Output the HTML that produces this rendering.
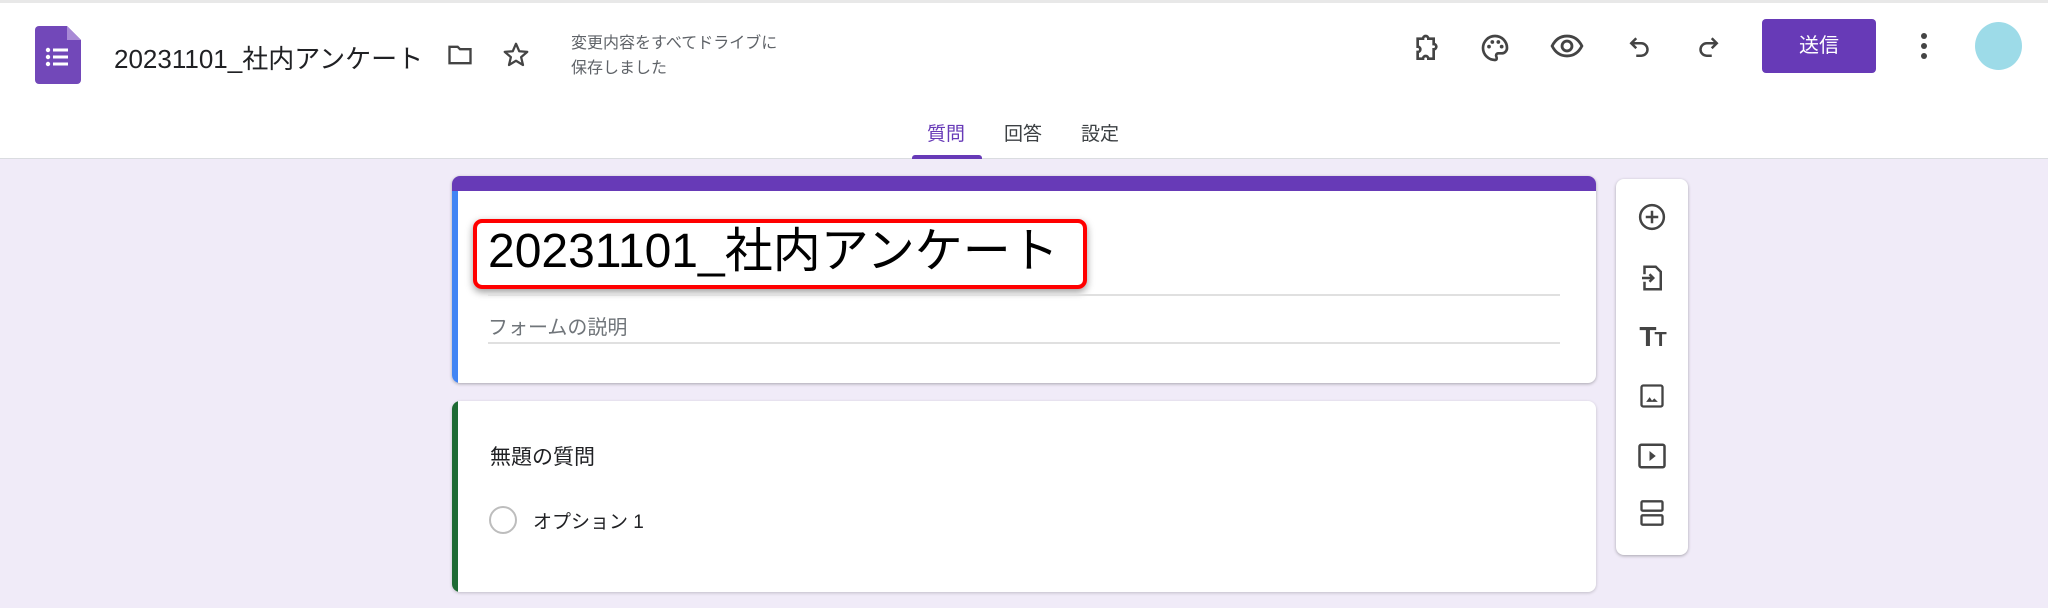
<!DOCTYPE html>
<html><head><meta charset="utf-8"><style>
*{margin:0;padding:0;box-sizing:border-box}
body{width:2048px;height:608px;background:#f0ebf8;font-family:"Liberation Sans","Noto Sans CJK JP",sans-serif;position:relative;overflow:hidden;color:#202124}
.abs{position:absolute}
header{position:absolute;left:0;top:0;width:2048px;height:159px;background:#fff;border-bottom:1px solid #dadce0;border-top:3px solid #e8e8e8}
.ic{position:absolute;transform:translate(-50%,-50%)}
</style></head><body>
<header></header>
<svg class="abs" style="left:35px;top:26px" width="46" height="58" viewBox="0 0 46 58"><path d="M4 0H32L46 14V54a4 4 0 0 1-4 4H4a4 4 0 0 1-4-4V4a4 4 0 0 1 4-4z" fill="#7248b9"/><path d="M32 0V14H46z" fill="#a98ad6"/><g fill="#fff"><circle cx="13" cy="24" r="2.2"/><circle cx="13" cy="31" r="2.2"/><circle cx="13" cy="38" r="2.2"/><rect x="18" y="22.5" width="15" height="3"/><rect x="18" y="29.5" width="15" height="3"/><rect x="18" y="36.5" width="15" height="3"/></g></svg>
<div class="abs" style="left:114px;top:39px;font-size:26px;color:#202124">20231101_社内アンケート</div>
<svg class="ic" style="left:460px;top:55px" width="28" height="28" viewBox="0 0 24 24"><path d="M3 5h7l2 2h9v12H3z" fill="none" stroke="#444" stroke-width="2"/></svg>
<svg class="ic" style="left:516px;top:55px" width="30" height="30" viewBox="0 0 24 24"><path d="M12 3l2.6 6 6.4.5-4.9 4.2 1.5 6.3L12 16.6 6.4 20l1.5-6.3L3 9.5 9.4 9z" fill="none" stroke="#444" stroke-width="1.8" stroke-linejoin="round"/></svg>
<div class="abs" style="left:571px;top:31px;font-size:16px;line-height:25px;color:#5f6368">変更内容をすべてドライブに<br>保存しました</div>
<svg class="ic" style="left:1427px;top:48px" width="32" height="32" viewBox="0 0 24 24"><path d="M5 5h4a2 2 0 0 1 4 0h4v4a2 2 0 0 1 0 4v7h-4a2 2 0 0 0-4 0H5v-5a2 2 0 0 0 0-4z" fill="none" stroke="#444" stroke-width="2"/></svg>
<svg class="ic" style="left:1495px;top:48px" width="32" height="32" viewBox="0 0 24 24"><path d="M12 3a9 9 0 0 0 0 18c1.5 0 1.5-1.5 1-2.5s0-2.5 1.5-2.5H17a4 4 0 0 0 4-4c0-5-4-9-9-9z" fill="none" stroke="#444" stroke-width="2"/><circle cx="7.5" cy="11" r="1.4" fill="#444"/><circle cx="10" cy="7.5" r="1.4" fill="#444"/><circle cx="14.5" cy="7.5" r="1.4" fill="#444"/><circle cx="17" cy="11" r="1.4" fill="#444"/></svg>
<svg class="ic" style="left:1567px;top:46px" width="34" height="34" viewBox="0 0 24 24"><path d="M1.5 12C4 7 8 5 12 5s8 2 10.5 7c-2.5 5-6.5 7-10.5 7S4 17 1.5 12z" fill="none" stroke="#444" stroke-width="2"/><circle cx="12" cy="12" r="3.5" fill="none" stroke="#444" stroke-width="2"/></svg>
<svg class="ic" style="left:1640px;top:47px" width="30" height="30" viewBox="0 0 24 24"><path d="M9 5L5 9l4 4M5 9h8a5 5 0 0 1 0 10H9" fill="none" stroke="#444" stroke-width="2"/></svg>
<svg class="ic" style="left:1708px;top:47px" width="30" height="30" viewBox="0 0 24 24"><path d="M15 5l4 4-4 4M19 9h-8a5 5 0 0 0 0 10h4" fill="none" stroke="#444" stroke-width="2"/></svg>
<div class="abs" style="left:1762px;top:19px;width:114px;height:54px;background:#673ab7;border-radius:4px;color:#fff;font-size:20px;line-height:54px;text-align:center">送信</div>
<svg class="ic" style="left:1924px;top:46px" width="8" height="30" viewBox="0 0 8 30"><circle cx="4" cy="5" r="3" fill="#444"/><circle cx="4" cy="15" r="3" fill="#444"/><circle cx="4" cy="25" r="3" fill="#444"/></svg>
<div class="abs" style="left:1975px;top:22px;width:47px;height:48px;border-radius:50%;background:#9ddbe8"></div>
<div class="abs" style="left:927px;top:119px;font-size:19px;color:#673ab7">質問</div>
<div class="abs" style="left:1004px;top:119px;font-size:19px;color:#3c4043">回答</div>
<div class="abs" style="left:1081px;top:119px;font-size:19px;color:#3c4043">設定</div>
<div class="abs" style="left:912px;top:155px;width:70px;height:4px;background:#673ab7;border-radius:3px 3px 0 0"></div>
<div class="abs" style="left:452px;top:176px;width:1144px;height:207px;background:#fff;border-radius:8px;box-shadow:0 1px 3px rgba(0,0,0,.3);overflow:hidden">
<div class="abs" style="left:0;top:0;width:100%;height:15px;background:#673ab7"></div>
<div class="abs" style="left:0;top:15px;width:6px;height:100%;background:#4285f4"></div>
</div>
<div class="abs" style="left:473px;top:219px;width:614px;height:70px;border:4px solid #f00;border-radius:9px;box-shadow:0 3px 8px rgba(0,0,0,.4)"></div>
<div class="abs" style="left:488px;top:222px;font-size:48px;color:#000;line-height:60px">20231101_社内アンケート</div>
<div class="abs" style="left:488px;top:294px;width:1072px;height:2px;background:#e0e0e0"></div>
<div class="abs" style="left:488px;top:311px;font-size:20px;color:#70757a">フォームの説明</div>
<div class="abs" style="left:488px;top:342px;width:1072px;height:2px;background:#e0e0e0"></div>
<div class="abs" style="left:452px;top:401px;width:1144px;height:191px;background:#fff;border-radius:8px;box-shadow:0 1px 3px rgba(0,0,0,.2);overflow:hidden">
<div class="abs" style="left:0;top:0;width:6px;height:100%;background:#1e6b34"></div>
</div>
<div class="abs" style="left:490px;top:441px;font-size:21px;color:#202124">無題の質問</div>
<div class="abs" style="left:489px;top:506px;width:28px;height:28px;border:2px solid #bdbdbd;border-radius:50%"></div>
<div class="abs" style="left:533px;top:507px;font-size:19px;color:#202124">オプション 1</div>
<div class="abs" style="left:1616px;top:179px;width:72px;height:376px;background:#fff;border-radius:8px;box-shadow:0 1px 3px rgba(0,0,0,.3)"></div>
<svg class="ic" style="left:1652px;top:217px" width="30" height="30" viewBox="0 0 24 24"><circle cx="12" cy="12" r="9.5" fill="none" stroke="#444" stroke-width="2"/><path d="M12 7v10M7 12h10" stroke="#444" stroke-width="2"/></svg>
<svg class="ic" style="left:1652px;top:278px" width="30" height="30" viewBox="0 0 24 24"><path d="M6 9V3h9l4 4v14H6v-6" fill="none" stroke="#444" stroke-width="2"/><path d="M4 12h9M10 9l3 3-3 3" fill="none" stroke="#444" stroke-width="2"/></svg>
<div class="ic" style="left:1652px;top:337px;font-size:28px;font-weight:bold;color:#444;letter-spacing:-2px">T<span style="font-size:20px">T</span></div>
<svg class="ic" style="left:1652px;top:396px" width="28" height="28" viewBox="0 0 24 24"><rect x="3" y="3" width="18" height="18" rx="1.5" fill="none" stroke="#444" stroke-width="2"/><path d="M7 17l3-4 2 3 2-2 3 3z" fill="#444"/></svg>
<svg class="ic" style="left:1652px;top:456px" width="30" height="28" viewBox="0 0 24 22"><rect x="2" y="2" width="20" height="18" rx="1.5" fill="none" stroke="#444" stroke-width="2"/><path d="M10 7l5 4-5 4z" fill="#444"/></svg>
<svg class="ic" style="left:1652px;top:513px" width="28" height="30" viewBox="0 0 24 24"><rect x="3" y="2" width="18" height="8" rx="1" fill="none" stroke="#444" stroke-width="2"/><rect x="3" y="14" width="18" height="8" rx="1" fill="none" stroke="#444" stroke-width="2"/></svg>
</body></html>
